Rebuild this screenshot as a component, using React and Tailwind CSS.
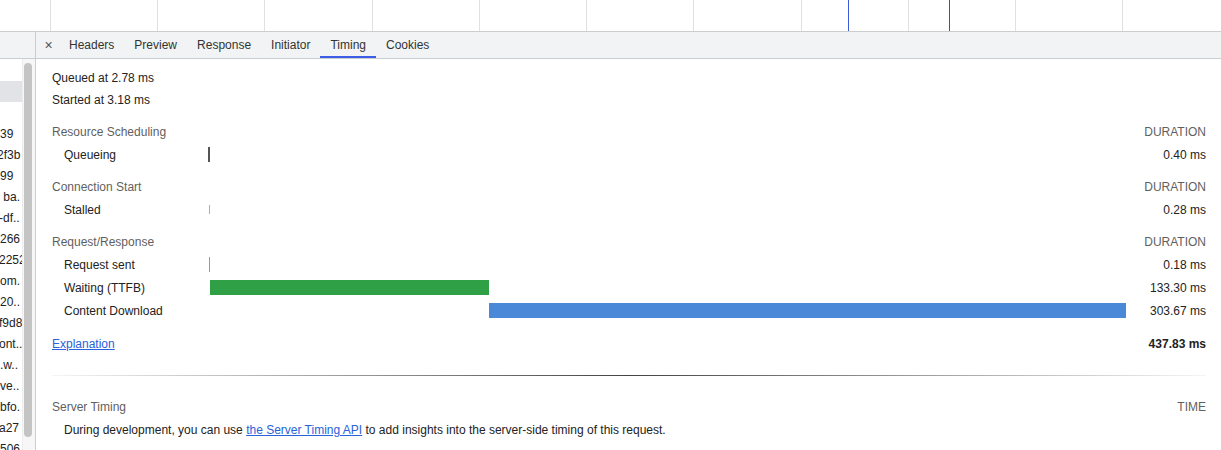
import React from "react";

const gridXs = [50.5, 157.5, 264.5, 372.5, 479.5, 586.5, 693.5, 801.5, 908.5, 1015.5, 1122.5];

function Overview() {
  return (
    <svg width="1221" height="31" className="block shrink-0">
      {gridXs.map((x) => (
        <line key={x} x1={x} y1="0" x2={x} y2="31" stroke="#e0e0e0" strokeWidth="1" />
      ))}
      <line x1="848.5" y1="0" x2="848.5" y2="31" stroke="#3b5bdb" strokeWidth="1" />
      <line x1="949.5" y1="0" x2="949.5" y2="31" stroke="#a3352c" strokeWidth="1" />
    </svg>
  );
}

const leftRows = [
  ["", 0], ["", 0], ["", 0],
  ["39", 0], ["2f3b", -3], ["99", 0], [" ba.", 0], ["-df..", -1], ["266", 0], ["2252", -1],
  ["om.", 0], ["20..", 0], ["f9d8", -1], ["ont..", -1], [".w..", 0], ["ve..", 0], ["bfo.", 0], ["a27", -1], ["506", 0],
];

function LeftPanel() {
  return (
    <div className="w-[36px] shrink-0 flex flex-col border-r border-[#cbcdd1]">
      <div className="h-[28px] shrink-0 bg-[#f1f3f4] border-y border-[#cbcdd1]" />
      <div className="flex flex-1 overflow-hidden">
        <div className="w-[22px] shrink-0 flex flex-col overflow-hidden pt-[1px]">
          {leftRows.map(([t, off], i) => (
            <div
              key={i}
              className={`h-[21px] shrink-0 flex items-center overflow-hidden whitespace-pre ${i === 1 ? "bg-[#e1e3e6]" : ""}`}
            >
              <span className={`shrink-0 ${off === -3 ? "ml-[-3px]" : off === -1 ? "ml-[-1px]" : ""}`}>{t}</span>
            </div>
          ))}
        </div>
        <div className="w-[13px] shrink-0 bg-[#f7f7f7] border-l border-[#ececec] pt-[4px] pl-[1px]">
          <div className="w-[8px] h-[374px] rounded-full bg-[#c4c4c4]" />
        </div>
      </div>
    </div>
  );
}

const tabs = ["Headers", "Preview", "Response", "Initiator", "Timing", "Cookies"];

function TabBar() {
  return (
    <div className="h-[28px] shrink-0 flex items-stretch bg-[#f1f3f4] border-y border-[#cbcdd1] text-[#333]">
      <div className="w-[23px] flex items-center justify-center pl-[2px] text-[14px] text-[#555]">×</div>
      {tabs.map((t) => (
        <div
          key={t}
          className={`px-[10px] flex items-center border-b-2 ${t === "Timing" ? "border-[#3b5de7]" : "border-transparent"}`}
        >
          <span className="mt-[2px]">{t}</span>
        </div>
      ))}
    </div>
  );
}

function SectionHeader({ title, right }) {
  return (
    <div className="h-[23px] flex items-center justify-between text-[#5f5f5f] mt-[9px]">
      <span>{title}</span>
      <span>{right}</span>
    </div>
  );
}

function Row({ label, value, children }) {
  return (
    <div className="h-[23px] grid grid-cols-[156px_918px_80px] items-center">
      <span className="pl-[12px] whitespace-nowrap">{label}</span>
      <div className="flex items-center h-full">{children}</div>
      <span className="text-right">{value}</span>
    </div>
  );
}

export default function App() {
  return (
    <div className="w-[1221px] h-[450px] overflow-hidden bg-white flex flex-col font-['Liberation_Sans',Arial,Helvetica,sans-serif] text-[12px] text-[#222]">
      <Overview />
      <div className="flex flex-1 overflow-hidden">
        <LeftPanel />
        <div className="flex-1 flex flex-col overflow-hidden">
          <TabBar />
          <div className="pl-[16px] pr-[15px] pt-[8px]">
            <div className="h-[22px] flex items-center">Queued at 2.78 ms</div>
            <div className="h-[22px] flex items-center">Started at 3.18 ms</div>

            <SectionHeader title="Resource Scheduling" right="DURATION" />
            <Row label="Queueing" value="0.40 ms">
              <div className="w-[2px] h-[15px] bg-[#555]" />
            </Row>

            <SectionHeader title="Connection Start" right="DURATION" />
            <Row label="Stalled" value="0.28 ms">
              <div className="ml-[1px] w-[1px] h-[9px] bg-[#b0b0b0]" />
            </Row>

            <SectionHeader title="Request/Response" right="DURATION" />
            <Row label="Request sent" value="0.18 ms">
              <div className="ml-[1px] w-[1px] h-[15px] bg-[#9a9a9a]" />
            </Row>
            <Row label="Waiting (TTFB)" value="133.30 ms">
              <div className="ml-[2px] w-[279px] h-[15px] bg-[#30a046]" />
            </Row>
            <Row label="Content Download" value="303.67 ms">
              <div className="ml-[281px] w-[637px] h-[15px] bg-[#4a88d8]" />
            </Row>

            <div className="h-[23px] mt-[10px] flex items-center justify-between">
              <span className="text-[#2962d9] underline">Explanation</span>
              <span className="font-bold">437.83 ms</span>
            </div>

            <div className="mt-[20px] h-px bg-[linear-gradient(to_right,rgba(0,0,0,0.04),#444_50%,rgba(0,0,0,0.04))]" />

            <div className="mt-[19px] h-[23px] flex items-center justify-between text-[#5f5f5f]">
              <span>Server Timing</span>
              <span>TIME</span>
            </div>
            <div className="h-[23px] flex items-center pl-[12px]">
              <span>
                During development, you can use{" "}
                <span className="text-[#2962d9] underline">the Server Timing API</span> to add insights into the
                server-side timing of this request.
              </span>
            </div>
          </div>
        </div>
      </div>
    </div>
  );
}
